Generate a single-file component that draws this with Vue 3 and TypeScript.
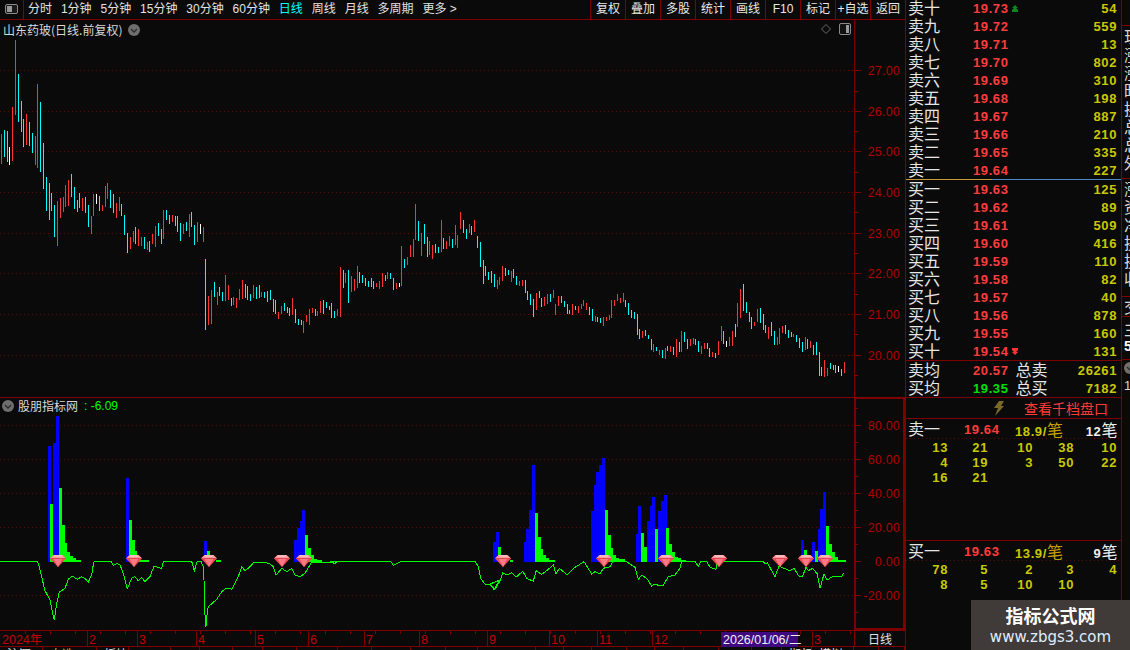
<script setup lang="ts">
type Candle = { x: number; y: number; h: number; fill: string }

const colors: Record<string, string> = { r: '#ff3333', c: '#00ffff', w: '#ffffff' }
const candleData =
  '1r134-164 4c130-157 7c131-162 9w147-165 12r107-161 15r40-115 18c74-122 21c101-132 23c119-147 26r114-145 29c122-146 32c133-153 35r136-165 37r84-168 40c102-172 43c143-189 46c177-211 49c183-220 51c193-211 54c205-237 57r201-246 60r198-218 63r197-212 65r185-207 68r180-206 71c174-197 74c187-209 77c200-212 79c193-208 82r198-211 85c197-213 88c205-227 91r216-234 93r194-216 96w194-204 99c196-211 102r205-211 105r186-207 107r183-199 110c190-208 113c194-213 116r203-218 119r197-211 121c204-216 124c215-235 127c233-253 130r237-249 133r231-242 135c227-244 138r229-246 141r237-246 144c237-249 147r242-250 149c241-252 152r234-244 155r226-247 158c223-236 161c229-244 163r210-239 166c210-220 169c215-224 172r215-222 175c216-226 177c216-232 180c223-241 183r224-234 186c222-231 189r214-237 191c212-227 194c225-245 197r222-242 200w224-234 203r227-242 ' +
  '205c259-330 208r296-325 211r290-324 214c282-297 217r292-305 219c287-296 222c292-301 225r275-301 228r285-300 231c298-306 233r297-305 236r298-308 239r289-300 242r280-299 245c284-298 247c286-300 250c294-301 253r285-298 256c287-299 259c285-298 261r292-297 264c292-298 267c291-302 270c290-300 273c299-312 275c300-314 278r312-319 281r306-314 284c303-311 287c307-313 289c308-316 292r298-315 295c309-323 298c319-325 301c320-325 303r321-333 306r315-322 309r309-325 312r308-313 315c309-316 317r311-316 320r301-313 323c300-314 326c302-308 329c306-310 331c303-318 334c311-318 337r309-316 340r267-317 343c270-288 345r273-283 348c270-303 351r276-292 354r279-291 357r266-288 359c272-283 362c275-283 365c278-286 368c281-287 371c278-287 373c281-289 376r283-287 379r281-289 382r273-287 385c275-281 387r272-279 390c273-279 393c278-290 396r283-289 399w283-287 401r246-286 404c259-268 407r257-265 410r245-257 413r239-257 415r204-240 418c221-241 421r233-256 424c224-244 427c237-257 429r241-255 ' +
  '432r245-259 435c244-253 438c247-253 441r220-252 443c238-249 446r241-249 449r236-246 452c239-248 455r225-245 457r235-248 460r212-229 463c220-233 466c229-239 469r224-233 471c226-235 474r220-232 477c236-248 480c242-267 483c260-284 485c266-276 488c272-280 491c271-283 494c274-287 497r280-289 499r277-285 502r266-281 505c268-276 508c270-275 511r271-282 513c269-278 516c276-285 519r281-286 522r280-286 525c280-293 527c291-300 530c294-305 533c299-317 536r293-310 539c291-298 541c298-307 544r297-306 547r294-304 550c294-302 553r290-298 555r304-315 558r296-306 561c296-303 564c301-307 567c304-314 569c310-314 572r304-315 575c306-310 578r306-313 581r304-309 583r300-306 586r303-310 589c307-315 592c309-321 595r316-322 597c317-322 600c318-323 603r317-326 606r317-321 609r315-320 611r300-318 614r300-306 617r294-301 620r298-303 623r293-302 625c300-307 628c303-315 631c310-318 634c312-319 637c314-335 639c329-339 642r331-338 645c330-336 648c335-339 651c339-350 653r344-352 656c347-351 659r350-355 662c350-358 665r348-359 667c346-351 670r346-352 673c347-355 676r339-357 679c342-352 681r331-352 684c332-342 687c339-349 690r339-346 693r338-344 695c339-345 698c341-352 701r346-354 704r343-349 707c343-349 709c348-357 712r352-357 715c353-358 718r341-355 721r326-341 723c331-344 726w341-347 729r337-346 732r331-346 735c324-337 737r303-327 740r289-318 743c284-311 746c302-313 749c312-322 751c317-329 754r322-326 757r309-322 760c308-323 763c314-330 765c325-333 768r327-339 771c322-336 774c331-345 777r337-345 779r328-344 782r326-333 785c325-334 788c330-338 791c332-337 793r334-337 796c335-342 799c338-348 802c342-352 805r337-350 807c339-349 810r341-348 813c345-355 816c342-355 819c352-376 821c367-376 824r360-377 827r368-376 830c363-369 833c365-370 835c365-373 838w366-372 841c369-376 844r362-373'

const candles: Candle[] = candleData.split(' ').map((s) => {
  const m = s.match(/^(\d+)([rcw])(\d+)-(\d+)$/) as RegExpMatchArray
  const y = Number(m[3])
  return { x: Number(m[1]), y, h: Number(m[4]) - y, fill: colors[m[2]] }
})

const priceGrid = [70, 111, 151, 192, 233, 273, 314, 355]
const priceTicks = [
  { y: 70, t: '27.00' }, { y: 111, t: '26.00' }, { y: 151, t: '25.00' }, { y: 192, t: '24.00' },
  { y: 233, t: '23.00' }, { y: 273, t: '22.00' }, { y: 314, t: '21.00' }, { y: 355, t: '20.00' },
]
const priceMinor = [91, 131, 172, 212, 253, 294, 334, 375]

const indTicks = [
  { y: 425, t: '80.00' }, { y: 459, t: '60.00' }, { y: 493, t: '40.00' },
  { y: 527, t: '20.00' }, { y: 561, t: '0.00' }, { y: 595, t: '-20.00' },
]
const indMinor = [408, 442, 476, 510, 544, 578, 612]
const indGrid = [425, 459, 493, 527, 595]

const BLUE = '#0000ff'
const GREEN = '#00ff00'
const b = (x0: number, x1: number, top: number) => ({ x: x0, w: x1 - x0, y: top, h: 562 - top, fill: BLUE })
const g = (x0: number, x1: number, top: number) => ({ x: x0, w: x1 - x0, y: top, h: 562 - top, fill: GREEN })
const bars = [
  b(48, 51, 446), g(50, 53, 504), b(53, 56, 443), b(56, 59, 416), g(59, 62, 488), g(62, 65, 525), g(65, 67, 543), g(67, 70, 552), g(70, 73, 556), g(73, 76, 558), g(76, 81, 560),
  b(126, 129, 478), g(129, 132, 520), g(132, 135, 540), g(135, 137, 551), g(137, 140, 556), g(140, 149, 560),
  b(204, 207, 541), g(207, 210, 551), g(216, 221, 560),
  b(294, 297, 540), b(297, 300, 528), b(300, 302, 521), b(302, 305, 510), g(305, 308, 535), g(308, 311, 548), g(311, 314, 555), g(314, 317, 559), g(317, 322, 560),
  b(493, 496, 542), b(496, 499, 532), g(498, 501, 547), g(510, 513, 560),
  b(524, 526, 542), b(526, 529, 529), b(529, 532, 510), b(532, 535, 465), g(535, 538, 513), g(538, 541, 537), g(541, 543, 549), g(543, 546, 555), g(546, 549, 558), g(549, 555, 560),
  b(591, 594, 511), b(594, 596, 485), b(596, 599, 472), b(599, 602, 465), b(602, 605, 458), g(605, 608, 510), g(608, 611, 535), g(611, 613, 548), g(613, 616, 555), g(616, 619, 558), g(619, 625, 559),
  b(636, 638, 534), b(638, 641, 506), g(641, 644, 533), g(644, 647, 547), b(647, 650, 521), b(650, 652, 506), b(652, 655, 497), g(655, 658, 529), b(658, 661, 511), b(661, 664, 501), b(664, 667, 495), g(666, 669, 528), g(669, 672, 544), g(672, 675, 552), g(675, 678, 557), g(678, 681, 558), g(681, 686, 560),
  b(801, 804, 540), g(804, 807, 550), b(812, 815, 542), g(815, 818, 551), b(818, 820, 529), b(820, 823, 509), b(823, 826, 492), g(826, 829, 526), g(829, 832, 544), g(832, 835, 552), g(835, 838, 557), g(838, 846, 560),
]

const lineA = [0,514, 112,514, 118,530, 126,565, 135,602, 150,630, 157,665, 163,690, 170,640, 178,606, 195,595, 205,568, 217,558, 232,568, 245,560, 255,565, 265,577, 276,550, 281,516, 300,514, 333,514, 340,527, 350,520, 360,525, 370,550, 382,596, 395,565, 405,560, 415,572, 425,562, 435,575, 450,560, 462,528, 485,536, 490,516, 575,514, 583,542, 592,514, 603,514, 610,530, 612,570, 614,665, 618,710, 620,680, 625,650, 650,628, 665,605, 680,594, 695,598, 715,560, 725,530, 735,542, 750,530, 762,516, 790,516, 810,522, 820,530, 828,556, 845,535, 860,545, 875,535, 885,555, 900,560, 915,550, 935,516, 1000,516, 1005,523, 1012,516, 1050,514]
const lineB = [0,64, 4,64, 12,73, 20,64, 182,64, 190,76, 208,67, 212,64, 435,64, 445,80, 452,115, 465,132, 480,134, 492,148, 510,120]
const lineC = [30,432, 45,448, 60,422, 68,398, 80,405, 95,398, 108,412, 128,394, 140,415, 160,424, 168,392, 185,403, 205,388, 220,375, 228,402, 238,385, 262,405, 285,382, 312,365, 335,402, 345,395, 360,402, 370,385, 390,380, 398,364, 438,364, 465,382, 475,418, 485,406, 500,415, 515,438, 525,432, 535,436, 548,438, 565,410, 585,405, 600,385, 605,364, 645,364, 655,380, 662,364, 680,364, 690,382, 708,388, 712,364, 850,364, 855,372, 862,368, 885,410, 897,378, 912,385, 930,392, 942,385, 958,410, 968,408, 978,382, 985,392, 998,385, 1012,402, 1020,445, 1032,402, 1042,420, 1060,408, 1085,410, 1091,398]

function toPts(arr: number[], ox: number, oy: number): string {
  const out: string[] = []
  for (let i = 0; i < arr.length; i += 2) out.push(`${(arr[i] / 3 + ox).toFixed(1)},${(arr[i + 1] / 3 + oy).toFixed(1)}`)
  return out.join(' ')
}
const linePts = [toPts(lineA, 0, 390), toPts(lineB, 330, 540), toPts(lineC, 480, 440)].join(' ')

const gems = [58, 134, 209, 282, 304, 503, 604, 666, 719, 780, 806, 825]

const months = [
  { x: 87, t: '2' }, { x: 137, t: '3' }, { x: 196, t: '4' }, { x: 255, t: '5' }, { x: 308, t: '6' },
  { x: 364, t: '7' }, { x: 419, t: '8' }, { x: 487, t: '9' }, { x: 549, t: '10' }, { x: 597, t: '11' },
  { x: 652, t: '12' }, { x: 812, t: '3' },
]
const timeTicks = Array.from({ length: 34 }, (_, i) => 25 + i * 25)

const tabEdges = [0, 43, 97, 129, 171, 200, 233, 263, 297, 338, 372, 411, 446, 478, 536, 564, 592, 627, 655, 684, 719, 752, 782, 812, 854, 879, 905]
const tabLabels: Record<number, { t: string; c: string }> = {
  0: { t: '沪深', c: 'tab-white' },
  1: { t: '自选', c: 'tab-yellow' },
  2: { t: '板块', c: 'tab-white' },
  22: { t: '期权', c: 'tab-white' },
  23: { t: '模拟', c: 'tab-white' },
}
const tabs = tabEdges.slice(1).map((e, i) => ({ w: e - tabEdges[i], t: tabLabels[i]?.t ?? '', c: tabLabels[i]?.c ?? '' }))

const leftNav = ['分时', '1分钟', '5分钟', '15分钟', '30分钟', '60分钟', '日线', '周线', '月线', '多周期', '更多 >']
const rightNav = ['复权', '叠加', '多股', '统计', '画线', 'F10', '标记', '+自选', '返回']

const asks = [
  ['卖十', '19.73', '54'], ['卖九', '19.72', '559'], ['卖八', '19.71', '13'], ['卖七', '19.70', '802'], ['卖六', '19.69', '310'],
  ['卖五', '19.68', '198'], ['卖四', '19.67', '887'], ['卖三', '19.66', '210'], ['卖二', '19.65', '335'], ['卖一', '19.64', '227'],
]
const bids = [
  ['买一', '19.63', '125'], ['买二', '19.62', '89'], ['买三', '19.61', '509'], ['买四', '19.60', '416'], ['买五', '19.59', '110'],
  ['买六', '19.58', '82'], ['买七', '19.57', '40'], ['买八', '19.56', '878'], ['买九', '19.55', '160'], ['买十', '19.54', '131'],
]
const sellQ = ['13', '21', '10', '38', '10', '4', '19', '3', '50', '22', '16', '21']
const buyQ = ['78', '5', '2', '3', '4', '8', '5', '10', '10']
const stripA = ['现', '涨', '涨', '昨', '换', '总', '总', '外']
const stripB = ['涨', '资', '净', '换', '换', '收']
</script>

<template>
  <div class="app">
    <div class="left">
      <header class="toolbar">
        <div class="tool-icon">
          <svg width="14" height="11" viewBox="0 0 14 11">
            <rect x="0.5" y="0.5" width="12" height="9" rx="1.5" fill="#1a1a1a" stroke="#8a8a8a" />
            <rect x="2" y="2" width="5" height="6" fill="#9a9a9a" />
          </svg>
        </div>
        <nav class="nav-left">
          <span v-for="n in leftNav" :key="n" :class="{ active: n === '日线' }">{{ n }}</span>
        </nav>
        <nav class="nav-right">
          <span v-for="n in rightNav" :key="n">{{ n }}</span>
        </nav>
      </header>

      <section class="pane price">
        <div class="plot">
          <svg class="plot-svg" width="854" height="377" viewBox="0 20 854 377" shape-rendering="crispEdges">
            <line v-for="y in priceGrid" :key="y" x1="0" x2="854" :y1="y + 0.5" :y2="y + 0.5" class="grid" />
            <rect v-for="c in candles" :key="c.x" :x="c.x" :y="c.y" width="1" :height="c.h" :fill="c.fill" />
          </svg>
          <div class="pane-title">
            <span>山东药玻(日线.前复权)</span>
            <svg width="12" height="12" viewBox="0 0 12 12">
              <circle cx="6" cy="6" r="6" fill="#6e6e6e" />
              <path d="M3 5 L6 8 L9 5" fill="none" stroke="#2a2a2a" stroke-width="1.3" />
            </svg>
          </div>
          <div class="pane-tools">
            <svg width="10" height="10" viewBox="0 0 10 10">
              <path d="M5 .5 L9.5 5 L5 9.5 L.5 5 Z" fill="none" stroke="#6a6a6a" />
            </svg>
            <svg width="12" height="12" viewBox="0 0 12 12">
              <rect x=".5" y=".5" width="11" height="11" rx="1.5" fill="#111" stroke="#8a8a8a" />
              <rect x="7" y="2" width="3" height="8" fill="#9a9a9a" />
            </svg>
          </div>
        </div>
        <svg class="axis" width="51" height="377" viewBox="854 20 51 377">
          <g shape-rendering="crispEdges">
            <rect x="854" y="20" width="1" height="377" fill="#800000" />
            <line v-for="t in priceTicks" :key="t.y" x1="855" x2="861" :y1="t.y + 0.5" :y2="t.y + 0.5" class="tick" />
            <line v-for="y in priceMinor" :key="y" x1="855" x2="858" :y1="y + 0.5" :y2="y + 0.5" class="tick" />
          </g>
          <text v-for="t in priceTicks" :key="t.t" x="900" :y="t.y + 5" text-anchor="end" class="axis-text">{{ t.t }}</text>
        </svg>
      </section>

      <section class="pane ind">
        <div class="plot">
          <svg class="plot-svg" width="854" height="232" viewBox="0 398 854 232" shape-rendering="crispEdges">
            <line v-for="y in indGrid" :key="y" x1="0" x2="854" :y1="y + 0.5" :y2="y + 0.5" class="grid" />
            <rect v-for="(r, i) in bars" :key="i" :x="r.x" :y="r.y" :width="r.w" :height="r.h" :fill="r.fill" />
            <polyline :points="linePts" fill="none" stroke="#00ff00" stroke-width="1" />
            <g v-for="x in gems" :key="x" :transform="`translate(${x} 561)`" shape-rendering="auto">
              <path d="M-8 -2.5 L-4.5 -6 H4.5 L8 -2.5 L0 6 Z" fill="#ee4a58" />
              <path d="M-8 -2.5 L-4.5 -6 H4.5 L8 -2.5 Z" fill="#ff9aa0" />
              <path d="M-4.5 -2.5 L0 6 L4.5 -2.5 Z" fill="#ff7a84" />
              <path d="M-4 -5 H4" stroke="#ffd8d8" stroke-width="1" />
              <path d="M-8 -2.5 H8" stroke="#d83a48" stroke-width=".8" />
            </g>
          </svg>
          <div class="pane-title ind-title">
            <svg width="12" height="12" viewBox="0 0 12 12">
              <circle cx="6" cy="6" r="6" fill="#6e6e6e" />
              <path d="M3 5 L6 8 L9 5" fill="none" stroke="#2a2a2a" stroke-width="1.3" />
            </svg>
            <span>股朋指标网</span>
            <span class="ind-value">: -6.09</span>
          </div>
        </div>
        <svg class="axis" width="51" height="232" viewBox="854 398 51 232">
          <g shape-rendering="crispEdges" fill="#800000">
            <rect x="854" y="398" width="2" height="232" />
            <rect x="903" y="398" width="2" height="232" />
            <rect x="854" y="398" width="51" height="1" />
            <rect x="854" y="628" width="51" height="2" />
            <line v-for="t in indTicks" :key="t.y" x1="856" x2="861" :y1="t.y + 0.5" :y2="t.y + 0.5" class="tick" />
            <line v-for="y in indMinor" :key="y" x1="856" x2="858" :y1="y + 0.5" :y2="y + 0.5" class="tick" />
          </g>
          <text v-for="t in indTicks" :key="t.t" x="900" :y="t.y + 5" text-anchor="end" class="axis-text">{{ t.t }}</text>
        </svg>
      </section>

      <div class="timebar">
        <svg width="854" height="16" viewBox="0 630 854 16">
          <g shape-rendering="crispEdges">
            <line v-for="x in timeTicks" :key="x" :x1="x + 0.5" :x2="x + 0.5" y1="630" y2="633" class="tick" />
            <line v-for="m in months" :key="m.x" :x1="m.x + 0.5" :x2="m.x + 0.5" y1="630" y2="646" class="tick" />
            <rect x="721" y="631" width="77" height="15" fill="#3f0a80" />
          </g>
          <text x="2" y="643" class="time-text">2024年</text>
          <text v-for="m in months" :key="m.x + m.t" :x="m.x + 2" y="643" class="time-text">{{ m.t }}</text>
          <text x="723" y="642.5" class="time-hi">2026/01/06/二</text>
        </svg>
        <div class="period">日线</div>
      </div>

      <div class="tabs">
        <span v-for="(tab, i) in tabs" :key="i" class="tab" :class="tab.c" :style="{ width: tab.w + 'px' }">{{ tab.t }}</span>
      </div>
    </div>

    <aside class="book">
      <div class="ob-rows">
        <div v-for="(r, i) in asks" :key="r[0]" class="ob-row">
          <span class="cn">{{ r[0] }}</span>
          <span class="price-cell">
            <span class="red num">{{ r[1] }}</span>
            <svg v-if="i === 0" class="arrow" width="6" height="7" viewBox="0 0 6 7">
              <path d="M3 0 L6 3 H4 L6 5 V7 H0 V5 L2 3 H0 Z" fill="#0a8a1c" />
            </svg>
          </span>
          <span class="yellow num">{{ r[2] }}</span>
        </div>
      </div>
      <div class="ob-split" />
      <div class="ob-rows">
        <div v-for="(r, i) in bids" :key="r[0]" class="ob-row">
          <span class="cn">{{ r[0] }}</span>
          <span class="price-cell">
            <span class="red num">{{ r[1] }}</span>
            <svg v-if="i === 9" class="arrow" width="6" height="7" viewBox="0 0 6 7">
              <path d="M3 7 L0 4 H2 L0 2 V0 H6 V2 L4 4 H6 Z" fill="#ff3333" />
            </svg>
          </span>
          <span class="yellow num">{{ r[2] }}</span>
        </div>
      </div>

      <div class="totals">
        <div class="ob-row">
          <span class="cn">卖均</span>
          <span class="price-cell"><span class="red num">20.57</span><span class="cn total-l">总卖</span></span>
          <span class="yellow num">26261</span>
        </div>
        <div class="ob-row">
          <span class="cn">买均</span>
          <span class="price-cell"><span class="green num">19.35</span><span class="cn total-l">总买</span></span>
          <span class="yellow num">7182</span>
        </div>
      </div>

      <div class="depth-btn">
        <svg width="12" height="15" viewBox="0 0 12 15">
          <path d="M6 0 H11 L8 5 H11 L2 15 L5 7 H1 Z" fill="#7a6a28" />
        </svg>
        <span>查看千档盘口</span>
      </div>

      <div class="queue sell">
        <div class="q-head">
          <span class="cn">卖一</span>
          <span class="red num q-price">19.64</span>
          <span class="yellow num q-avg">18.9/<em class="cn">笔</em></span>
          <span class="white num q-count">12<em class="cn">笔</em></span>
        </div>
        <div class="q-grid">
          <span v-for="(q, i) in sellQ" :key="i" class="yellow num">{{ q }}</span>
        </div>
      </div>

      <div class="queue">
        <div class="q-head">
          <span class="cn">买一</span>
          <span class="red num q-price">19.63</span>
          <span class="yellow num q-avg">13.9/<em class="cn">笔</em></span>
          <span class="white num q-count">9<em class="cn">笔</em></span>
        </div>
        <div class="q-grid">
          <span v-for="(q, i) in buyQ" :key="i" class="yellow num">{{ q }}</span>
        </div>
      </div>
    </aside>

    <aside class="strip">
      <div class="strip-a">
        <span v-for="(c, i) in stripA" :key="i">{{ c }}</span>
      </div>
      <div class="strip-b">
        <span v-for="(c, i) in stripB" :key="i">{{ c }}</span>
      </div>
      <div class="strip-c"><span>交</span></div>
      <div class="strip-d"><span>主</span><b>5</b></div>
      <div class="strip-e">
        <svg width="12" height="12" viewBox="0 0 12 12">
          <circle cx="6" cy="6" r="6" fill="#6e6e6e" />
          <path d="M3 5 L6 8 L9 5" fill="none" stroke="#2a2a2a" stroke-width="1.3" />
        </svg>
        <span>1</span>
      </div>
    </aside>

    <div class="watermark">
      <strong>指标公式网</strong>
      <span>www.zbgs3.com</span>
    </div>
  </div>
</template>

<style>
html, body { background: #0a0a0a; }
</style>

<style scoped>
.app {
  position: relative;
  display: flex;
  width: 1130px;
  height: 650px;
  overflow: hidden;
  background: #0a0a0a;
  color: #e6e6e6;
  font-family: "Noto Sans CJK SC", "Liberation Sans", sans-serif;
  font-size: 12px;
}
.left {
  display: flex;
  flex-direction: column;
  flex: 0 0 906px;
  width: 906px;
  height: 650px;
  border-right: 1px solid #800000;
  box-sizing: border-box;
}
.toolbar {
  display: flex;
  align-items: center;
  height: 20px;
  flex: none;
  border-bottom: 1px solid #800000;
  box-sizing: border-box;
  line-height: 19px;
}
.tool-icon {
  display: flex;
  align-items: center;
  justify-content: center;
  width: 23px;
  height: 19px;
  border-right: 1px solid #800000;
  border-left: 1px solid #500000;
  box-sizing: content-box;
  flex: none;
  margin-right: 4px;
  margin-left: -1px;
}
.nav-left {
  display: flex;
  gap: 8.9px;
  font-family: "Liberation Sans", "Noto Sans CJK SC", sans-serif;
  color: #e2e2e2;
}
.nav-left .active { color: #00ffff; }
.nav-right {
  display: flex;
  margin-left: auto;
}
.nav-right span {
  width: 35px;
  height: 19px;
  box-sizing: border-box;
  border-left: 1px solid #800000;
  text-align: center;
  font-family: "Liberation Sans", "Noto Sans CJK SC", sans-serif;
  color: #e8e8e8;
}
.pane {
  display: flex;
  flex: none;
  box-sizing: border-box;
}
.pane.price { height: 377px; }
.pane.ind { height: 233px; border-top: 1px solid #800000; }
.plot {
  position: relative;
  flex: 0 0 854px;
  width: 854px;
  overflow: hidden;
}
.plot-svg { display: block; }
.axis {
  display: block;
  flex: none;
}
.grid {
  stroke: #5a0808;
  stroke-width: 1;
  stroke-dasharray: 1 3;
  shape-rendering: auto;
}
.tick { stroke: #800000; stroke-width: 1; }
.axis-text {
  fill: #b00000;
  font-family: "Liberation Sans", sans-serif;
  font-size: 12.5px;
  letter-spacing: 0.2px;
}
.pane-title {
  position: absolute;
  top: 1px;
  left: 3px;
  display: flex;
  align-items: center;
  gap: 6px;
  height: 18px;
  color: #d8d8d8;
  font-size: 12px;
  line-height: 18px;
}
.ind-title {
  top: -1px;
  left: 2px;
  gap: 4px;
}
.ind-value {
  margin-left: 2px;
  color: #00ff00;
  font-family: "Liberation Sans", sans-serif;
}
.pane-tools {
  position: absolute;
  top: 3px;
  right: 3px;
  display: flex;
  align-items: center;
  gap: 8px;
}
.timebar {
  display: flex;
  flex: none;
  height: 17px;
  border-top: 1px solid #800000;
  border-bottom: 1px solid #800000;
  box-sizing: border-box;
}
.timebar svg { display: block; flex: none; }
.time-text {
  fill: #c00000;
  font-family: "Liberation Sans", "Noto Sans CJK SC", sans-serif;
  font-size: 12.5px;
}
.time-hi {
  fill: #f0f0f0;
  font-family: "Liberation Sans", "Noto Sans CJK SC", sans-serif;
  font-size: 12.5px;
}
.period {
  flex: 1;
  border-left: 1px solid #800000;
  text-align: center;
  line-height: 15px;
  font-size: 12px;
  color: #e0e0e0;
}
.tabs {
  display: flex;
  flex: 1;
  overflow: hidden;
}
.tab {
  display: block;
  flex: none;
  box-sizing: border-box;
  height: 4px;
  overflow: hidden;
  border-right: 1px solid #800000;
  padding-left: 7px;
  font-size: 12px;
  line-height: 14px;
  white-space: nowrap;
}
.tab-white { color: #e8e8e8; }
.tab-yellow { color: #c8c800; }

.book {
  flex: 0 0 216px;
  width: 216px;
  height: 650px;
  border-right: 1px solid #800000;
  box-sizing: border-box;
  margin-top: -1px;
}
.ob-row {
  display: grid;
  grid-template-columns: 65px 1fr auto;
  align-items: center;
  height: 18px;
  padding: 0 4px 0 2px;
}
.cn {
  font-family: "Noto Sans CJK SC", sans-serif;
  font-size: 16px;
  font-weight: 400;
  font-style: normal;
  line-height: 18px;
  color: #e6e6e6;
}
.ob-row > .cn,
.price-cell > .cn,
.q-head > .cn {
  margin-top: -2px;
}
.num {
  font-family: "Liberation Sans", "Noto Sans CJK SC", sans-serif;
  font-size: 13px;
  font-weight: 700;
  letter-spacing: 0.6px;
}
.price-cell { display: flex; align-items: center; }
.arrow { margin-left: 3px; }
.red { color: #ff3b3b; }
.green { color: #00e000; }
.yellow { color: #c8c800; }
.white { color: #f0f0f0; }
.ob-split {
  height: 1px;
  background: linear-gradient(90deg, #c99a3c 0 40%, #4a8ac8 40% 100%);
}
.totals {
  height: 36px;
  border-top: 1px solid #800000;
}
.total-l { margin-left: 7px; }
.depth-btn {
  display: flex;
  align-items: center;
  height: 22px;
  border-top: 1px solid #800000;
  border-bottom: 1px solid #800000;
  box-sizing: border-box;
  padding-left: 87px;
  gap: 19px;
  font-size: 14px;
  color: #ff3b3b;
}
.queue.sell {
  height: 122px;
  border-bottom: 1px solid #800000;
  box-sizing: border-box;
}
.q-head {
  display: flex;
  align-items: center;
  height: 20px;
  padding: 0 3px 0 2px;
  background-image: linear-gradient(90deg, #5a0a0a 1px, transparent 1px);
  background-size: 4px 1px;
  background-repeat: repeat-x;
  background-position: 0 bottom;
}
.q-head .cn { width: 56px; }
.q-head em.cn { width: auto; color: #c8a000; }
.q-count em.cn { color: #f0f0f0; }
.q-price { width: 51px; }
.q-count { margin-left: auto; }
.q-grid {
  display: grid;
  grid-template-columns: 42px 40px 45px 41px 43px;
  grid-auto-rows: 15px;
  text-align: right;
  padding-top: 1px;
  line-height: 15px;
}

.strip {
  flex: 1;
  height: 650px;
  overflow: hidden;
  margin-top: 25px;
  font-size: 16px;
  line-height: 18px;
  color: #d8d8d8;
  border-top: 1px solid #800000;
}
.strip span, .strip b { display: block; }
.strip-a, .strip-b, .strip-c, .strip-d {
  box-sizing: border-box;
  border-bottom: 1px solid #800000;
  padding-left: 2px;
}
.strip-a { height: 153px; padding-top: 1px; }
.strip-b { height: 118px; }
.strip-c { height: 20px; }
.strip-d { height: 43px; padding-top: 2px; }
.strip-d b { font-family: "Liberation Sans", sans-serif; font-size: 14px; color: #fff; }
.strip-e { padding: 2px 0 0 2px; }
.strip-e svg { display: block; }
.strip-e span { font-family: "Liberation Sans", sans-serif; font-size: 13px; margin-top: 3px; }

.watermark {
  position: absolute;
  left: 971px;
  top: 600px;
  width: 159px;
  height: 50px;
  display: flex;
  flex-direction: column;
  align-items: center;
  background: #403a38;
  color: #fff;
}
.watermark strong {
  font-family: "Noto Sans CJK SC", sans-serif;
  font-size: 18px;
  font-weight: 700;
  line-height: 24px;
  margin-top: 3px;
}
.watermark span {
  font-family: "DejaVu Sans", sans-serif;
  font-size: 15px;
  line-height: 18px;
  color: #dfeeff;
  margin-top: 1px;
}
</style>
